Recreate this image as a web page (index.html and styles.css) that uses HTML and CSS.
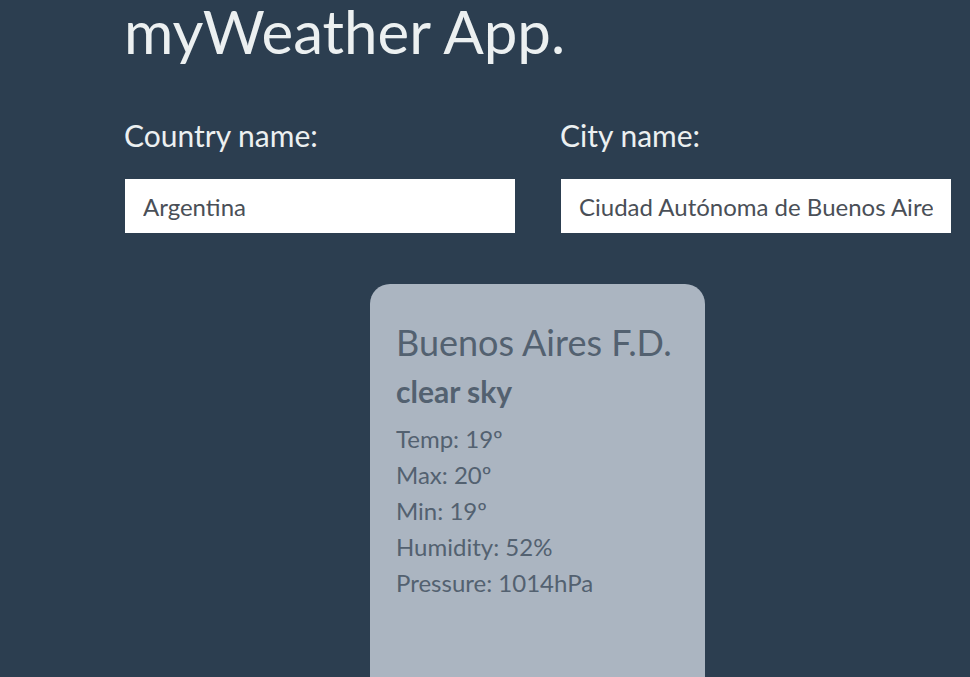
FILE: index.html
```html
<!DOCTYPE html>
<html lang="en">
<head>
<meta charset="utf-8">
<title>myWeather App.</title>
<link rel="stylesheet" href="styles.css">
</head>
<body>
<div class="app">
  <h1 class="title">myWeather App.</h1>
  <form class="search">
    <div class="field">
      <label class="label" for="country">Country name:</label>
      <input class="input" id="country" type="text" value="Argentina">
    </div>
    <div class="field">
      <label class="label" for="city">City name:</label>
      <input class="input" id="city" type="text" value="Ciudad Autónoma de Buenos Aires">
    </div>
  </form>
  <div class="results">
    <div class="card">
      <h2 class="city">Buenos Aires F.D.</h2>
      <h3 class="desc">clear sky</h3>
      <p class="stat">Temp: 19º</p>
      <p class="stat">Max: 20º</p>
      <p class="stat">Min: 19º</p>
      <p class="stat">Humidity: 52%</p>
      <p class="stat">Pressure: 1014hPa</p>
    </div>
  </div>
</div>
</body>
</html>
```

FILE: styles.css
```css
html, body {
  margin: 0;
  padding: 0;
  height: 100%;
  overflow: hidden;
}
body {
  background: #2c3e50;
  font-family: Lato, "Open Sans", sans-serif;
  color: #ecf0f1;
}
.app {
  width: 826px;
  margin-left: 125px;
}
.title {
  margin: 0 0 0 -1px;
  font-size: 60px;
  font-weight: 400;
  line-height: 63px;
}
.search {
  display: flex;
  gap: 46px;
  margin-top: 52px;
}
.field {
  display: flex;
  flex-direction: column;
  width: 390px;
}
.label {
  font-size: 30px;
  line-height: 40px;
  margin-left: -1px;
}
.input {
  margin-top: 24px;
  height: 54px;
  box-sizing: border-box;
  border: none;
  background: #ffffff;
  padding: 0 18px;
  font-family: Lato, sans-serif;
  font-size: 24px;
  color: #4a4f57;
  outline: none;
}
.results {
  display: flex;
  justify-content: center;
  margin-top: 51px;
}
.card {
  width: 335px;
  height: 500px;
  box-sizing: border-box;
  background: #abb5c1;
  border-radius: 20px;
  padding: 36px 26px;
  color: #536170;
  margin-left: -1px;
}
.city {
  margin: 0;
  font-size: 36px;
  font-weight: 400;
  line-height: 44px;
}
.desc {
  margin: 9px 0 0;
  font-size: 30px;
  font-weight: 700;
  line-height: 36px;
}
.stat {
  margin: 0;
  font-size: 24px;
  line-height: 36px;
}
.desc + .stat {
  margin-top: 12px;
}
```
